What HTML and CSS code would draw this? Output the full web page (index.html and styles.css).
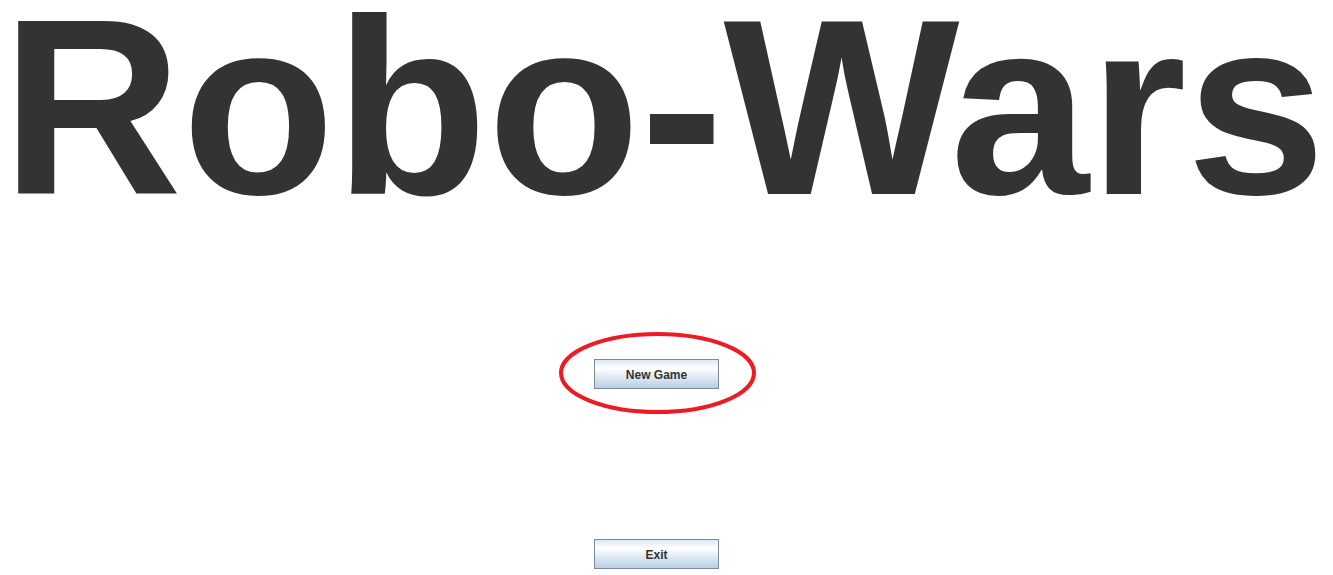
FILE: index.html
```html
<!DOCTYPE html>
<html>
<head>
<meta charset="utf-8">
<title>Robo-Wars</title>
<link rel="stylesheet" href="styles.css">
</head>
<body>
<main class="screen">
  <h1 class="title">Robo-Wars</h1>
  <div class="menu">
    <div class="btn-wrap">
      <button class="btn">New Game</button>
      <svg class="mark" width="201" height="86" viewBox="0 0 201 86" aria-hidden="true">
        <ellipse cx="100.5" cy="43" rx="96.5" ry="39" fill="none" stroke="#ed1c24" stroke-width="4"/>
      </svg>
    </div>
    <div class="btn-wrap">
      <button class="btn">Exit</button>
    </div>
  </div>
</main>
</body>
</html>
```

FILE: styles.css
```css
html, body {
  margin: 0;
  padding: 0;
  background: #ffffff;
}

.screen {
  width: 1333px;
  height: 575px;
  overflow: hidden;
  display: flex;
  flex-direction: column;
}

.title {
  margin: 0 -10px 0 -16px;
  padding-top: 8px;
  font-family: "Liberation Sans", Arial, sans-serif;
  font-weight: bold;
  font-size: 250px;
  line-height: 200px;
  color: #333333;
  text-align: center;
  white-space: nowrap;
}

.menu {
  display: flex;
  flex-direction: column;
  align-items: center;
  padding-right: 20px;
  padding-top: 151px;
  gap: 150px;
}

.btn-wrap {
  position: relative;
  width: 125px;
  height: 30px;
}

.btn {
  display: block;
  width: 125px;
  height: 30px;
  margin: 0;
  padding: 1px 0 0;
  box-sizing: border-box;
  border: 1px solid #7a8a99;
  border-radius: 0;
  background: linear-gradient(to bottom, #dde8f3 0%, #ffffff 30%, #dde8f3 62%, #b8cfe5 100%);
  font-family: "Liberation Sans", Arial, sans-serif;
  font-weight: bold;
  font-size: 12px;
  color: #333333;
  cursor: pointer;
}

.mark {
  position: absolute;
  left: -37px;
  top: -29px;
  pointer-events: none;
}
```
